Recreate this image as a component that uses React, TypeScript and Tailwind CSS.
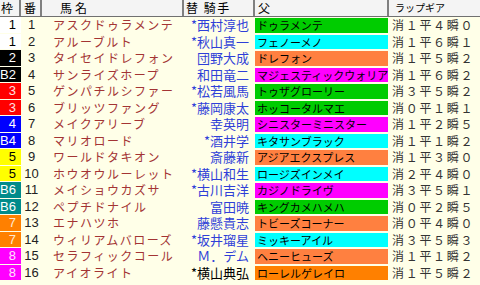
import React from 'react';

type Row = {
  waku: string;
  wakuBg: string;
  wakuText: string;
  num: number;
  horse: string;
  jockey: string;
  jockeyColor?: string;
  sire: string;
  sireBg: string;
  lap: string;
};

const GREEN = 'bg-[#00cc00]';
const CYAN = 'bg-[#00ffff]';
const ORANGE = 'bg-[#ff8040]';
const MAGENTA = 'bg-[#ff00ff]';

const rows: Row[] = [
  { waku: '1', wakuBg: 'bg-white', wakuText: 'text-black', num: 1, horse: 'アスクドゥラメンテ', jockey: '*西村淳也', sire: 'ドゥラメンテ', sireBg: GREEN, lap: '消１平４瞬０' },
  { waku: '1', wakuBg: 'bg-white', wakuText: 'text-black', num: 2, horse: 'アルーブルト', jockey: '*秋山真一', sire: 'フェノーメノ', sireBg: CYAN, lap: '消１平６瞬１' },
  { waku: '2', wakuBg: 'bg-black', wakuText: 'text-white', num: 3, horse: 'タイセイドレフォン', jockey: '団野大成', sire: 'ドレフォン', sireBg: ORANGE, lap: '消１平５瞬２' },
  { waku: 'B2', wakuBg: 'bg-black', wakuText: 'text-white', num: 4, horse: 'サンライズホープ', jockey: '和田竜二', sire: 'マジェスティックウォリアー', sireBg: MAGENTA, lap: '消１平６瞬２' },
  { waku: '3', wakuBg: 'bg-[#ff0000]', wakuText: 'text-[#ffe0e0]', num: 5, horse: 'ゲンパチルシファー', jockey: '*松若風馬', sire: 'トゥザグローリー', sireBg: GREEN, lap: '消３平５瞬２' },
  { waku: '3', wakuBg: 'bg-[#ff0000]', wakuText: 'text-[#ffe0e0]', num: 6, horse: 'ブリッツファング', jockey: '*藤岡康太', sire: 'ホッコータルマエ', sireBg: GREEN, lap: '消０平１瞬１' },
  { waku: '4', wakuBg: 'bg-[#0000ff]', wakuText: 'text-white', num: 7, horse: 'メイクアリーブ', jockey: '幸英明', sire: 'シニスターミニスター', sireBg: MAGENTA, lap: '消１平２瞬５' },
  { waku: 'B4', wakuBg: 'bg-[#0000ff]', wakuText: 'text-white', num: 8, horse: 'マリオロード', jockey: '*酒井学', sire: 'キタサンブラック', sireBg: CYAN, lap: '消１平１瞬２' },
  { waku: '5', wakuBg: 'bg-[#ffff00]', wakuText: 'text-black', num: 9, horse: 'ワールドタキオン', jockey: '斎藤新', sire: 'アジアエクスプレス', sireBg: ORANGE, lap: '消１平３瞬０' },
  { waku: '5', wakuBg: 'bg-[#ffff00]', wakuText: 'text-black', num: 10, horse: 'ホウオウルーレット', jockey: '*横山和生', sire: 'ロージズインメイ', sireBg: CYAN, lap: '消２平４瞬０' },
  { waku: 'B6', wakuBg: 'bg-[#008b8b]', wakuText: 'text-white', num: 11, horse: 'メイショウカズサ', jockey: '*古川吉洋', sire: 'カジノドライヴ', sireBg: MAGENTA, lap: '消３平５瞬１' },
  { waku: 'B6', wakuBg: 'bg-[#008b8b]', wakuText: 'text-white', num: 12, horse: 'ペプチドナイル', jockey: '富田暁', sire: 'キングカメハメハ', sireBg: GREEN, lap: '消０平２瞬５' },
  { waku: '7', wakuBg: 'bg-[#ff8000]', wakuText: 'text-[#ffe8d0]', num: 13, horse: 'エナハツホ', jockey: '藤懸貴志', sire: 'トビーズコーナー', sireBg: ORANGE, lap: '消０平４瞬０' },
  { waku: '7', wakuBg: 'bg-[#ff8000]', wakuText: 'text-[#ffe8d0]', num: 14, horse: 'ウィリアムバローズ', jockey: '*坂井瑠星', sire: 'ミッキーアイル', sireBg: CYAN, lap: '消３平５瞬３' },
  { waku: '8', wakuBg: 'bg-[#ff00ff]', wakuText: 'text-[#ffe0ff]', num: 15, horse: 'セラフィックコール', jockey: 'Ｍ．デム', sire: 'ヘニーヒューズ', sireBg: ORANGE, lap: '消１平１瞬２' },
  { waku: '8', wakuBg: 'bg-[#ff00ff]', wakuText: 'text-[#ffe0ff]', num: 16, horse: 'アイオライト', jockey: '*横山典弘', jockeyColor: 'text-black', sire: 'ローレルゲレイロ', sireBg: 'bg-[#ff8000]', lap: '消１平５瞬２' },
];

const font = "font-['Noto_Sans_CJK_JP',sans-serif]";
const digits = "font-['Liberation_Sans',Arial,sans-serif]";

export default function App() {
  return (
    <div className={`w-[480px] h-[285px] overflow-hidden bg-[#ffffe8] ${font}`}>
      {/* header */}
      <div className="flex h-[17px] bg-[#f4f4f4] border-b border-[#707070] text-[12px] leading-[16px] text-black">
        <div className="w-[21px] border-r-2 border-[#808080] pl-[1px]">枠</div>
        <div className="w-[21px] border-r-2 border-[#808080] pl-[3px]">番</div>
        <div className="w-[142px] border-r-2 border-[#808080] pl-[18px] tracking-[3px]">馬名</div>
        <div className="w-[71px] border-r-2 border-[#808080] pl-[2px] tracking-[1.5px]">替 騎手</div>
        <div className="w-[134px] border-r-2 border-[#808080] pl-[3px]">父</div>
        <div className="flex-1 pl-[6px] text-[10px]">ラップギア</div>
      </div>

      {rows.map((r) => (
        <div key={r.num} className="flex h-[16.5px] leading-[16.5px]">
          <div className={`w-[21px] ${r.wakuBg} ${r.wakuText} ${digits} border-b border-[#ffffe8] text-right pr-[5px] text-[13px] leading-[15.5px]`}>
            {r.waku}
          </div>
          <div className={`w-[21px] text-center text-[13px] text-[#222] ${digits}`}>{r.num}</div>
          <div className="w-[142px] pl-[11px] text-[12px] tracking-[1.5px] text-[#a33434] whitespace-nowrap overflow-hidden">
            {r.horse}
          </div>
          <div className={`w-[71px] pr-[6px] text-right text-[13px] whitespace-nowrap ${r.jockeyColor ?? 'text-[#2f3fd8]'}`}>
            {r.jockey}
          </div>
          <div className="w-[134px] py-[1px] pr-[1px]">
            <div className={`h-full ${r.sireBg} pl-[2px] text-[11px] leading-[14.5px] text-black whitespace-nowrap overflow-hidden`}>
              {r.sire}
            </div>
          </div>
          <div className="flex-1 pl-[3px] text-[12px] tracking-[1.7px] text-[#333] whitespace-nowrap">{r.lap}</div>
        </div>
      ))}
    </div>
  );
}
